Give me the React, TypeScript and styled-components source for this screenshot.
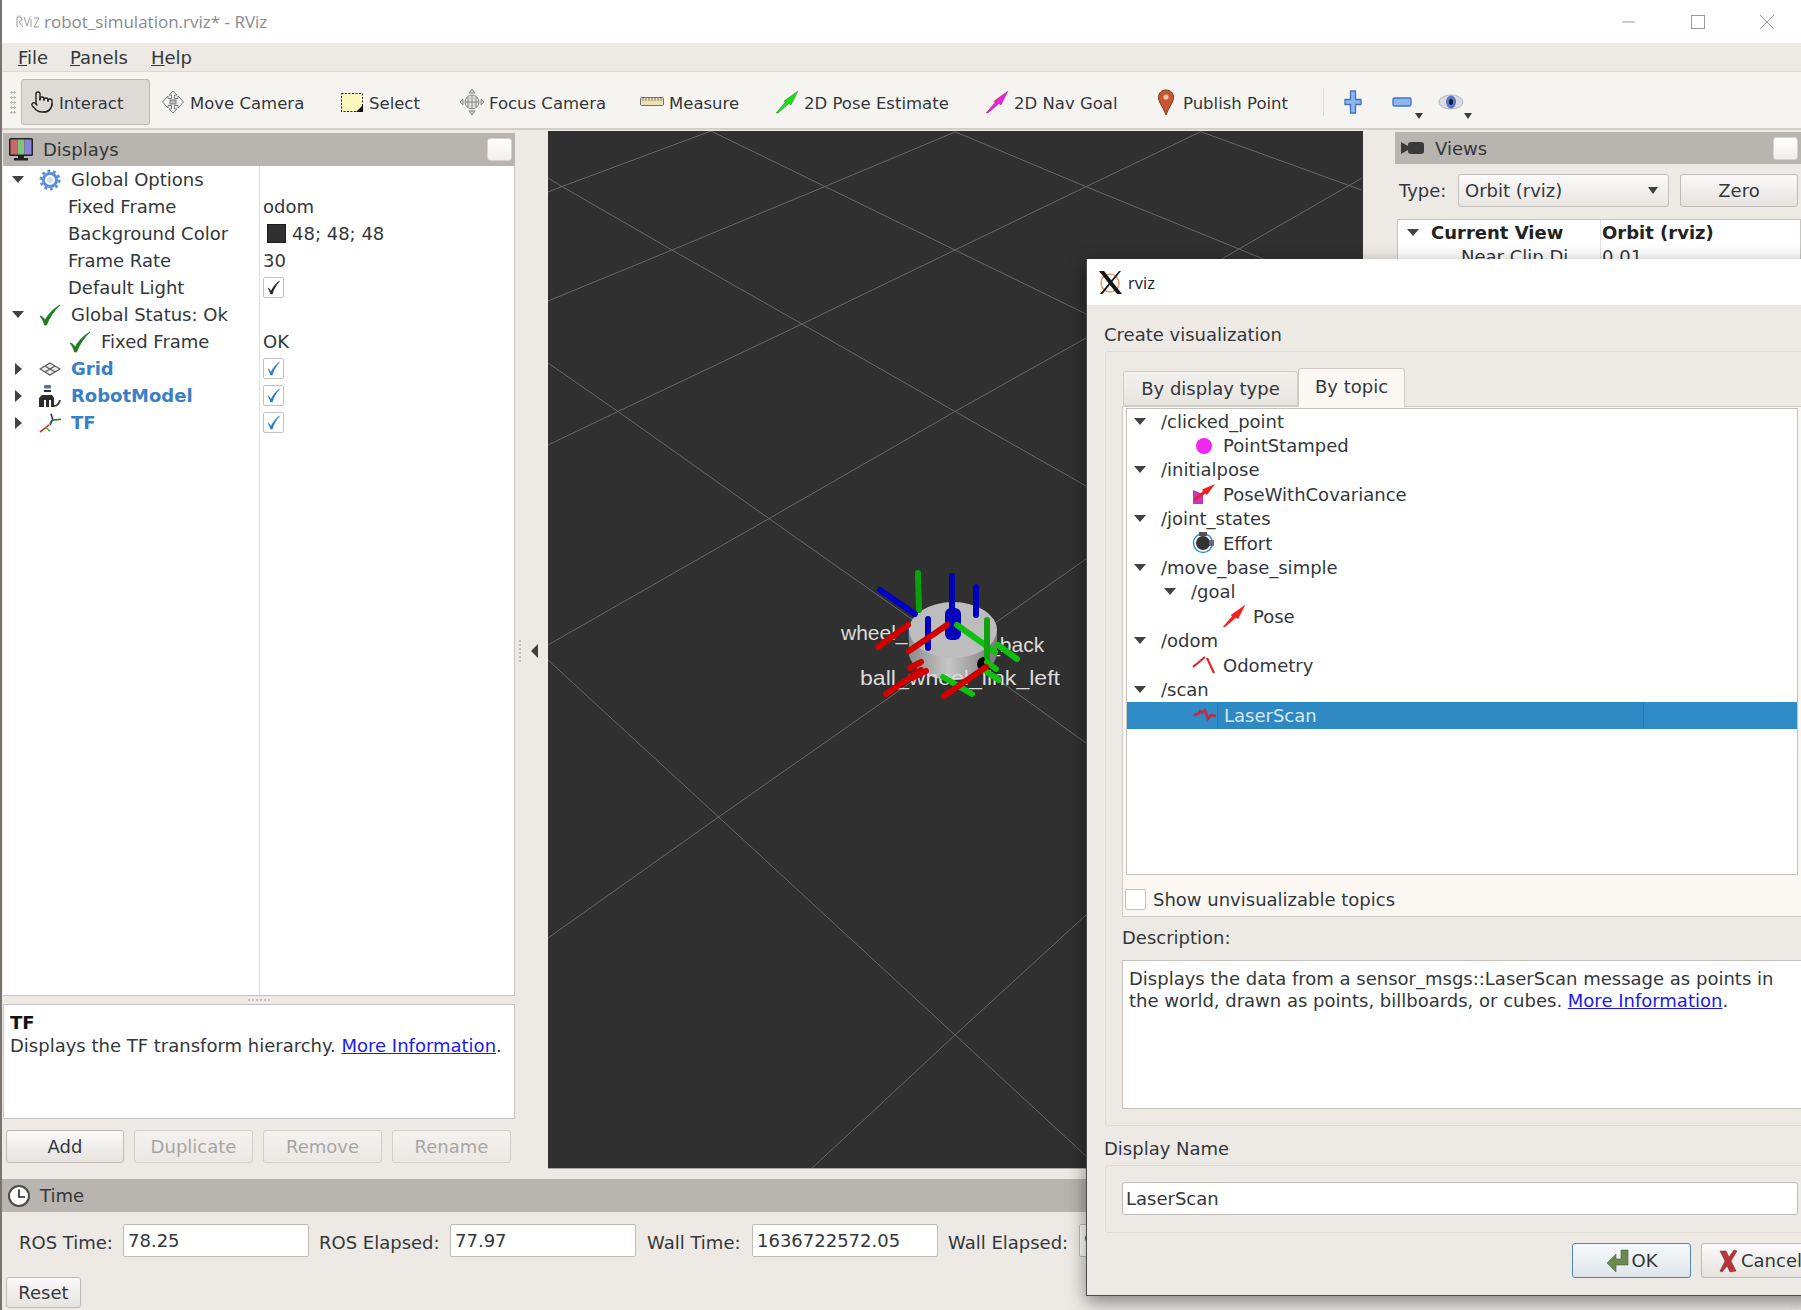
import { FC, ReactNode } from 'react';
import styled, { createGlobalStyle } from 'styled-components';
import { Pointer } from 'lucide-react';

const GlobalStyle = createGlobalStyle`
  html, body {
    margin: 0;
    padding: 0;
    background: #edeae6;
  }
  * {
    box-sizing: border-box;
  }
`;

const Screen = styled.div`
  position: relative;
  width: 1801px;
  height: 1310px;
  overflow: hidden;
  display: flex;
  flex-direction: column;
  border-left: 2px solid #77736f;
  background: #edeae6;
  color: #33373a;
  font-family: 'DejaVu Sans', sans-serif;
  font-size: 18px;
`;

/* window chrome */

const TitleBar = styled.div`
  height: 43px;
  flex: none;
  display: flex;
  align-items: center;
  padding-left: 14px;
  background: #fff;
  color: #8b8b8b;
  font-family: 'Open Sans', sans-serif;
  font-size: 17px;
`;

const TitleText = styled.span`
  margin-left: 4px;
`;

const WindowButtons = styled.div`
  margin-left: auto;
  width: 207px;
  height: 100%;
  display: flex;
`;

const WindowButton = styled.div`
  width: 69px;
  display: flex;
  align-items: center;
  justify-content: center;
`;

const MenuBar = styled.div`
  height: 29px;
  flex: none;
  display: flex;
  align-items: center;
  padding-left: 16px;
  background: #edeae6;
  border-bottom: 1px solid #dcd9d5;
  font-size: 18px;
`;

const MenuItem = styled.span`
  width: ${props => props.$width}px;
`;

const ToolBar = styled.div`
  height: 58px;
  flex: none;
  display: flex;
  align-items: center;
  padding-top: 4px;
  padding-left: 8px;
  background: #f6f4f0;
  border-bottom: 2px solid #d2cfca;
`;

const Grip = styled.div`
  width: 6px;
  height: 24px;
  margin-right: 5px;
  background-image: radial-gradient(circle, #bdb9b4 1px, transparent 1.2px);
  background-size: 3px 5px;
`;

const ToolButton = styled.div`
  width: ${props => props.$width}px;
  height: 46px;
  margin-right: ${props => props.$gap || 0}px;
  padding-left: 8px;
  display: flex;
  align-items: center;
  gap: 5px;
  font-size: 16.5px;
  border-radius: 3px;
  border: ${props => (props.$active ? '1px solid #bcb9b4' : '1px solid transparent')};
  background: ${props => (props.$active ? '#dedbd7' : 'transparent')};
`;

const ToolText = styled.span`
  padding-top: 2px;
`;

const ToolSeparator = styled.div`
  width: 1px;
  height: 28px;
  margin-right: 4px;
  background: #dedbd6;
`;

const ActionButton = styled.div`
  position: relative;
  width: 49px;
  height: 46px;
  display: flex;
  align-items: center;
  justify-content: center;
`;

const DropMark = styled.i`
  position: absolute;
  right: 3px;
  bottom: 6px;
  border-left: 4px solid transparent;
  border-right: 4px solid transparent;
  border-top: 6px solid #3c3c3c;
`;

/* main area */

const Main = styled.div`
  height: 1049px;
  flex: none;
  display: flex;
`;

const LeftDock = styled.div`
  width: 512px;
  margin-left: 1px;
  padding-top: 3px;
  display: flex;
  flex-direction: column;
`;

const DockHeader = styled.div`
  height: ${props => props.$height || 33}px;
  flex: none;
  display: flex;
  align-items: center;
  gap: 9px;
  padding-left: 5px;
  padding-right: 3px;
  background: #b8b4b0;
`;

const FloatButton = styled.div`
  margin-left: auto;
  width: 25px;
  height: 23px;
  background: linear-gradient(#fff, #f1efec);
  border: 1px solid #d5d2ce;
  border-radius: 3px;
`;

const PropertyTree = styled.div`
  height: 830px;
  flex: none;
  background: linear-gradient(#dfdfdf, #dfdfdf) no-repeat 256px 0 / 1px 100%, #fff;
  border-right: 1px solid #c8c5c1;
  border-bottom: 1px solid #c8c5c1;
`;

const PropRow = styled.div`
  height: 27px;
  display: flex;
  align-items: center;
  white-space: nowrap;
`;

const NameCell = styled.div`
  width: 257px;
  flex: none;
  display: flex;
  align-items: center;
  padding-left: ${props => props.$indent}px;
  font-weight: ${props => (props.$link ? 700 : 400)};
  color: ${props => (props.$link ? '#3a80c6' : 'inherit')};
`;

const ValueCell = styled.div`
  padding-left: 3px;
  display: flex;
  align-items: center;
  gap: 6px;
`;

const Twisty = styled.i`
  width: 14px;
  flex: none;
  display: flex;
  justify-content: center;
  margin-left: ${props => props.$left || 0}px;
  margin-right: ${props => props.$right || 0}px;
  &::before {
    content: '';
    ${props =>
      props.$open
        ? `border-left: 6.5px solid transparent;
           border-right: 6.5px solid transparent;
           border-top: 7px solid #3f4346;`
        : `border-top: 6.5px solid transparent;
           border-bottom: 6.5px solid transparent;
           border-left: 7px solid #3f4346;`}
  }
`;

const TreeIcon = styled.span`
  width: 24px;
  height: 24px;
  flex: none;
  margin-left: ${props => props.$left || 0}px;
  margin-right: ${props => props.$right || 0}px;
  display: flex;
  align-items: center;
  justify-content: center;
`;

const Swatch = styled.i`
  width: 19px;
  height: 19px;
  margin-left: 4px;
  background: #303030;
  border: 1px solid #1c1c1c;
`;

const CheckBox = styled.div`
  width: 21px;
  height: 21px;
  flex: none;
  margin-left: ${props => props.$left || 0}px;
  display: flex;
  align-items: center;
  justify-content: center;
  background: #fff;
  border: 1px solid #c5c2be;
  border-radius: 2px;
`;

const SplitBar = styled.div`
  height: 8px;
  flex: none;
  display: flex;
  align-items: center;
  justify-content: center;
  &::after {
    content: '';
    width: 24px;
    height: 2px;
    background-image: radial-gradient(circle, #bfbcb7 0.9px, transparent 1px);
    background-size: 4px 2px;
  }
`;

const HelpBox = styled.div`
  height: 115px;
  flex: none;
  padding: 6px 6px;
  background: #fff;
  border: 1px solid #c8c5c1;
  line-height: 23px;
  white-space: nowrap;
`;

const HelpTitle = styled.div`
  font-weight: 700;
  color: #111;
`;

const HelpLink = styled.a`
  color: #1a1af0;
  text-decoration: underline;
`;

const ButtonRow = styled.div`
  display: flex;
  gap: 10px;
  padding: 11px 0 0 3px;
`;

const PushButton = styled.div`
  width: ${props => props.$width}px;
  height: ${props => props.$height || 33}px;
  flex: none;
  margin-left: ${props => props.$left || 0}px;
  display: flex;
  align-items: center;
  justify-content: center;
  gap: 2px;
  color: ${props => (props.$disabled ? '#a8a6a3' : 'inherit')};
  background: ${props =>
    props.$focus
      ? 'linear-gradient(#f6f9fb, #dfe6ea)'
      : props.$disabled
        ? 'linear-gradient(#f4f2f0, #ebe8e4)'
        : 'linear-gradient(#fbfafa, #e6e3df)'};
  border: 1px solid ${props => (props.$focus ? '#4e88ae' : props.$disabled ? '#d2cfcb' : '#bebbb6')};
  border-radius: 3px;
`;

const CollapseBar = styled.div`
  width: 33px;
  flex: none;
  display: flex;
  align-items: center;
  gap: 10px;
  padding-left: 4px;
  padding-bottom: 8px;
`;

const SplitDots = styled.i`
  width: 2px;
  height: 24px;
  background-image: radial-gradient(circle, #bfbcb7 0.9px, transparent 1px);
  background-size: 2px 4px;
`;

const CollapseArrow = styled.i`
  border-top: 7px solid transparent;
  border-bottom: 7px solid transparent;
  border-right: 7px solid #3f3f3f;
`;

const Viewport = styled.div`
  width: 815px;
  height: 1038px;
  margin-top: 1px;
  flex: none;
  background: #303030;
  border-bottom: 1px solid #aaa;
`;

const RightDock = styled.div`
  width: 406px;
  margin-left: 32px;
  padding-top: 2px;
  flex: none;
`;

const TypeRow = styled.div`
  display: flex;
  align-items: center;
  height: 33px;
  margin-top: 10px;
  padding-left: 4px;
`;

const TypeLabel = styled.span`
  width: 59px;
`;

const Combo = styled.div`
  width: 211px;
  height: 33px;
  display: flex;
  align-items: center;
  justify-content: space-between;
  padding: 0 10px 0 6px;
  background: linear-gradient(#fbfafa, #e9e6e2);
  border: 1px solid #c2bfba;
  border-radius: 3px;
`;

const ComboArrow = styled.i`
  border-left: 5px solid transparent;
  border-right: 5px solid transparent;
  border-top: 7px solid #3f3f3f;
`;

const ViewTree = styled.div`
  height: 200px;
  margin: 12px 0 0 2px;
  background: linear-gradient(#dfdfdf, #dfdfdf) no-repeat 202px 0 / 1px 100%, #fff;
  border: 1px solid #c8c5c1;
`;

const ViewRow = styled.div`
  height: ${props => props.$height}px;
  display: flex;
  align-items: center;
  font-weight: ${props => (props.$bold ? 700 : 400)};
  color: ${props => (props.$bold ? '#222' : 'inherit')};
  white-space: nowrap;
`;

const ViewName = styled.span`
  width: ${props => props.$width}px;
  flex: none;
  padding-left: ${props => props.$indent || 0}px;
`;

/* time panel */

const TimeRow = styled.div`
  display: flex;
  align-items: center;
  margin-top: 12px;
  padding-left: 17px;
  white-space: nowrap;
`;

const TimeLabel = styled.span`
  width: ${props => props.$width}px;
  flex: none;
  padding-top: 3px;
  padding-left: ${props => props.$indent || 0}px;
`;

const TextField = styled.div`
  width: ${props => props.$width}px;
  height: 33px;
  flex: none;
  display: flex;
  align-items: center;
  padding-left: 4px;
  background: #fff;
  border: 1px solid #bfbcb7;
  border-radius: 2px;
`;

const ResetRow = styled.div`
  padding: 20px 0 0 4px;
`;

/* dialog */

const Dialog = styled.div`
  position: absolute;
  left: 1084px;
  top: 259px;
  width: 747px;
  height: 1037px;
  display: flex;
  flex-direction: column;
  background: #edeae6;
  border-left: 1px solid #4b4b4b;
  border-bottom: 1px solid #4b4b4b;
  box-shadow: 0 6px 18px rgba(0, 0, 0, 0.45);
`;

const DialogTitle = styled.div`
  height: 46px;
  flex: none;
  display: flex;
  align-items: center;
  gap: 5px;
  padding-left: 11px;
  background: #fff;
  color: #222;
  font-family: 'Open Sans', sans-serif;
  font-size: 16.5px;
`;

const DialogBody = styled.div`
  padding: 19px 17px 0 17px;
`;

const SectionLabel = styled.div`
  height: ${props => props.$height}px;
  padding-top: ${props => props.$top || 0}px;
  line-height: 22px;
`;

const GroupBox = styled.div`
  margin-left: 1px;
  padding: 16px 10px 0 16px;
  height: ${props => props.$height}px;
  border: 1px solid #dfdcd7;
  border-radius: 3px;
`;

const TabBar = styled.div`
  height: 38px;
  display: flex;
  align-items: flex-end;
  padding-left: 1px;
  position: relative;
`;

const Tab = styled.div`
  width: ${props => props.$width}px;
  height: ${props => (props.$active ? 39 : 35)}px;
  margin-bottom: ${props => (props.$active ? -1 : 0)}px;
  padding-bottom: ${props => (props.$active ? 3 : 0)}px;
  display: flex;
  align-items: center;
  justify-content: center;
  background: ${props => (props.$active ? '#fbf8f4' : 'linear-gradient(#f2f0ed, #e8e5e1)')};
  border: 1px solid #cfccc7;
  border-bottom: ${props => (props.$active ? 'none' : '1px solid #cfccc7')};
  border-radius: 3px 3px 0 0;
  position: relative;
`;

const TabPane = styled.div`
  height: 511px;
  padding: 1px 0 0 3px;
  background: #fbf8f4;
  border: 1px solid #cfccc7;
`;

const TopicTree = styled.div`
  height: 467px;
  width: 672px;
  background: #fff;
  border: 1px solid #c5c2be;
`;

const TopicRow = styled.div`
  height: ${props => (props.$selected ? 27 : 24.4)}px;
  display: flex;
  align-items: center;
  padding-left: ${props => props.$indent}px;
  white-space: nowrap;
  background: ${props => (props.$selected ? '#308cc6' : 'transparent')};
  color: ${props => (props.$selected ? '#d7e9f6' : 'inherit')};
`;

const TopicName = styled.span`
  margin-left: 14px;
`;

const LeafName = styled.span`
  margin-left: 7px;
`;

const SelectedCell = styled.span`
  width: 427px;
  height: 100%;
  padding-left: 6px;
  display: flex;
  align-items: center;
  border-left: 1px solid #2a7aae;
  border-right: 1px solid #2a7aae;
  background: #2e88c1;
`;

const CheckRow = styled.div`
  height: 42px;
  padding-top: 6px;
  display: flex;
  align-items: center;
  gap: 7px;
`;

const DescLabel = styled.div`
  height: 43px;
  display: flex;
  align-items: center;
  padding-bottom: 2px;
`;

const DescBox = styled.div`
  height: 149px;
  padding: 7px 6px;
  background: #fff;
  border: 1px solid #c5c2be;
  line-height: 22px;
`;

const NameInput = styled(TextField)`
  width: 676px;
  padding-left: 3px;
  border-radius: 3px;
`;

const DialogButtons = styled.div`
  display: flex;
  gap: 10px;
  margin-top: 10px;
  padding-left: 468px;
`;

const GripMark = styled.i`
  position: absolute;
  right: 3px;
  bottom: 2px;
  width: 8px;
  height: 8px;
  background-image: radial-gradient(circle, #bfbcb7 0.9px, transparent 1px);
  background-size: 3px 3px;
`;

/* icons */

const AppStamp: FC = () => (
  <svg width="24" height="13" viewBox="0 0 24 13" fill="none" stroke="#9a9a9a" strokeWidth="1">
    <path d="M1 12V2h4l1 3-3 2 4 5M8 2l3 9 3-9M15 4v8M18 3h5l-5 9h5" />
    <path d="M2 1h3M15 1v1" stroke="#c4c4c4" />
  </svg>
);

const HandIcon: FC = () => <Pointer size={24} color="#222" strokeWidth={1.4} />;

const MoveIcon: FC = () => (
  <svg width="24" height="24" viewBox="0 0 24 24" fill="#f4f4f4" stroke="#7c7c7c" strokeWidth="1">
    <path d="M12 1l4 4h-2.500v3.500H17V6l5.500 6-5.500 6v-2.500h-3.500V19H16l-4 4-4-4h2.500v-3.500H7V18l-5.500-6L7 6v2.500h3.500V5H8z" />
    <rect x="9" y="10" width="6" height="4" fill="#bdbdbd" />
  </svg>
);

const SelectIcon: FC = () => (
  <svg width="24" height="24" viewBox="0 0 24 24">
    <rect x="1.500" y="3.500" width="21" height="18" fill="#fdf8bd" stroke="#222" strokeWidth="1" strokeDasharray="2 1.500" />
    <path d="M23 15v7h-7z" fill="#111" />
  </svg>
);

const FocusIcon: FC = () => (
  <svg width="24" height="26" viewBox="0 0 24 26" fill="none" stroke="#8b8b8b" strokeWidth="1">
    <circle cx="12" cy="13" r="7" fill="#ddd" />
    <path d="M5 13h14M12 6v14M8 8v10M16 8v10" />
    <path d="M12 0l3 4H9zM12 26l3-4H9zM0 13l3-3v6zM24 13l-3-3v6z" fill="#c9c9c9" />
  </svg>
);

const RulerIcon: FC = () => (
  <svg width="24" height="14" viewBox="0 0 24 14">
    <rect x="0.500" y="2.500" width="23" height="8" rx="1" fill="#eee2b5" stroke="#6f6f6f" />
    <path d="M3 3v3M6 3v3M9 3v3M12 3v3M15 3v3M18 3v3M21 3v3" stroke="#777" strokeWidth="1" />
  </svg>
);

const PoseIcon: FC<{ color: string; edge?: string; size?: number }> = ({ color, edge = '#222', size = 24 }) => (
  <svg width={size} height={size} viewBox="0 0 24 24">
    <path d="M1 23L10 12.500 9 11 23 1 16 15l-2-1.500L3 23z" fill={color} stroke={edge} strokeWidth="0.300" />
  </svg>
);

const PinIcon: FC = () => (
  <svg width="24" height="27" viewBox="0 0 24 27">
    <path d="M12 1c4.500 0 7.500 3 7.500 7.500 0 5-4.500 9-7.500 17.500C9 17.500 4.500 13.500 4.500 8.500 4.500 4 7.500 1 12 1z" fill="#c8552d" stroke="#7a3a22" />
    <circle cx="12" cy="8" r="2.600" fill="#e9c6a8" />
  </svg>
);

const PlusIcon: FC = () => (
  <svg width="20" height="26" viewBox="0 0 20 26">
    <path d="M7.500 2h5v8.500H18v5h-5.500V24h-5v-8.500H2v-5h5.500z" fill="#8fb6ea" stroke="#3f72c4" strokeWidth="1.300" strokeLinejoin="round" />
  </svg>
);

const MinusIcon: FC = () => (
  <svg width="20" height="10" viewBox="0 0 20 10">
    <rect x="1" y="1" width="18" height="8" rx="1.500" fill="#8fb6ea" stroke="#3f72c4" strokeWidth="1.300" />
  </svg>
);

const EyeIcon: FC = () => (
  <svg width="26" height="16" viewBox="0 0 26 16">
    <ellipse cx="13" cy="8" rx="12" ry="7" fill="#d9dce4" stroke="#b4b7bf" />
    <ellipse cx="13" cy="8" rx="5" ry="6.500" fill="#5878c4" />
    <ellipse cx="13" cy="8" rx="2" ry="3" fill="#0f1a3a" />
  </svg>
);

const MonitorIcon: FC = () => (
  <svg width="26" height="25" viewBox="0 0 26 25">
    <rect x="1" y="1" width="24" height="18" rx="1.500" fill="#222" />
    <rect x="2.500" y="2.500" width="7" height="15" fill="#c96a6a" />
    <rect x="9.500" y="2.500" width="7" height="15" fill="#7fc27f" />
    <rect x="16.500" y="2.500" width="7" height="15" fill="#8c84d6" />
    <path d="M10 19h6v2h4v2.500H6V21h4z" fill="#222" />
  </svg>
);

const CameraIcon: FC = () => (
  <svg width="26" height="16" viewBox="0 0 26 16">
    <path d="M1 2l7 4v4l-7 4z" fill="#3b3b3b" />
    <rect x="8" y="2" width="16" height="12" rx="3" fill="#3b3b3b" />
  </svg>
);

const ClockIcon: FC = () => (
  <svg width="24" height="24" viewBox="0 0 24 24">
    <circle cx="12" cy="12" r="10" fill="#fff" stroke="#4a4a4a" strokeWidth="2" />
    <path d="M12 5.500V13h6" fill="none" stroke="#222" strokeWidth="1.600" />
  </svg>
);

const GearIcon: FC = () => (
  <svg width="22" height="22" viewBox="0 0 22 22">
    <circle cx="11" cy="11" r="6.500" fill="none" stroke="#5f8fdc" strokeWidth="3" />
    <circle cx="11" cy="11" r="9" fill="none" stroke="#5f8fdc" strokeWidth="3" strokeDasharray="2.800 2.860" />
    <circle cx="11" cy="11" r="3" fill="#cfe0fa" />
  </svg>
);

const GreenCheck: FC = () => (
  <svg width="22" height="22" viewBox="0 0 22 22">
    <path d="M1 12c2.500.5 4 2 5 4.500C9 10.500 14 5 21 1 15.500 6 10.500 13 7.500 21H5.500C4.500 17 3 14.500 1 12z" fill="#1f7a1f" stroke="#1f7a1f" strokeWidth="0.800" />
  </svg>
);

const GridIcon: FC = () => (
  <svg width="22" height="14" viewBox="0 0 22 14" fill="#eee" stroke="#555" strokeWidth="1.200">
    <path d="M11 1l10 6-10 6L1 7zM6 4l10 6M16 4L6 10" />
  </svg>
);

const RobotIcon: FC = () => (
  <svg width="24" height="24" viewBox="0 0 24 24">
    <rect x="6" y="1" width="7" height="3.500" rx="1" fill="#5b6e9a" />
    <rect x="6" y="6" width="7" height="2" fill="#333" />
    <path d="M1 23v-9l3-3h10l2 3v9h-3v-7h-2v7H8v-7H6v7z" fill="#2c2c2c" />
    <path d="M16 22c3 0 5-2 6-6" fill="none" stroke="#444" strokeWidth="2" />
  </svg>
);

const AxesIcon: FC = () => (
  <svg width="26" height="24" viewBox="0 0 26 24" fill="none" strokeWidth="1.700">
    <path d="M12 14L2 22" stroke="#e02424" />
    <path d="M13 14l3-6-2-6" stroke="#2323c8" />
    <path d="M8 16l5 5" stroke="#2bc22b" />
    <path d="M13 13l2-4 10-1" stroke="#1c7c1c" />
  </svg>
);

const CheckMark: FC<{ color: string }> = ({ color }) => (
  <svg width="15" height="15" viewBox="0 0 15 15">
    <path d="M2 8c1.200.5 2.200 1.500 3 3.500C7 7 10 3.500 13.500 1 10.500 4.500 7.500 9 6.300 14H4.500C4 11.500 3 9.500 2 8z" fill={color} stroke={color} strokeWidth="0.600" />
  </svg>
);

const XLogo: FC = () => (
  <svg width="25" height="25" viewBox="0 0 25 25">
    <circle cx="12" cy="13" r="9" fill="none" stroke="#e8a26c" strokeWidth="1.600" />
    <path d="M1 1h5l18 23h-5z" fill="#151515" />
    <path d="M23 1h-2L2 24h2.500z" fill="#151515" />
  </svg>
);

const DotIcon: FC = () => (
  <svg width="18" height="18" viewBox="0 0 18 18">
    <circle cx="9" cy="9" r="8" fill="#ee28ee" />
  </svg>
);

const CovarianceIcon: FC = () => (
  <svg width="24" height="22" viewBox="0 0 24 22">
    <path d="M1 7l10 4v10H1z" fill="#c635bd" />
    <path d="M2 16L11 8l-1-1.500L23 1l-8 11-1.500-1.500L3 18z" fill="#ed2020" />
  </svg>
);

const EffortIcon: FC = () => (
  <svg width="24" height="24" viewBox="0 0 24 24">
    <circle cx="11" cy="12" r="9.500" fill="none" stroke="#2d8ae0" strokeWidth="1.400" />
    <circle cx="11" cy="12" r="7" fill="#333" />
    <rect x="7" y="1" width="8" height="4" fill="#555" />
    <rect x="17" y="9" width="5" height="6" fill="#667" />
  </svg>
);

const OdomIcon: FC = () => (
  <svg width="24" height="20" viewBox="0 0 24 20" fill="none" stroke="#e02525" strokeWidth="2.200">
    <path d="M1 12L13 2" />
    <path d="M15 3l7 15" />
  </svg>
);

const ScanIcon: FC = () => (
  <svg width="24" height="14" viewBox="0 0 24 14" fill="none" stroke="#c6283a" strokeWidth="2.400">
    <path d="M1 7l4-1 2-3 2 2 3-3 3 9 3-4 5 1" />
  </svg>
);

const OkIcon: FC = () => (
  <svg width="24" height="24" viewBox="0 0 24 24">
    <path d="M1 14l9-9v5h5V1h7v15H10v7z" fill="#6d8a4e" stroke="#46603a" strokeWidth="0.600" />
  </svg>
);

const CancelIcon: FC = () => (
  <svg width="20" height="24" viewBox="0 0 20 24">
    <path d="M1 2h6l3 6 5-7 3 1-6 10 5 10-6 1-3-6-5 6-2-1 5-10z" fill="#b9343a" stroke="#7a2226" strokeWidth="0.500" />
  </svg>
);

const WindowMin: FC = () => (
  <svg width="16" height="16"><path d="M1 8h13" stroke="#9a9a9a" /></svg>
);
const WindowMax: FC = () => (
  <svg width="16" height="16"><rect x="1.500" y="1.500" width="13" height="13" fill="none" stroke="#9a9a9a" /></svg>
);
const WindowClose: FC = () => (
  <svg width="18" height="18"><path d="M2 2l14 14M16 2L2 16" stroke="#9a9a9a" /></svg>
);

/* the 3D scene, drawn in screen coordinates of the viewport */

const gridLines: [number, number][][] = [
  [[711, 131], [825, 186.500], [955, 250], [1363, 449]],
  [[548, 178], [562, 186.500], [672, 250], [802, 324], [955, 411.500], [1086, 486], [1363, 650]],
  [[548, 363], [618, 411.500], [769, 518.600], [1004, 684], [1086, 743], [1363, 950]],
  [[548, 660], [718.600, 817], [955, 1035], [1086, 1156], [1100, 1169]],
  [[955, 131.700], [1086, 186.700], [1239, 249], [1363, 300]],
  [[1200.700, 131.700], [1361.500, 190]],
  [[548, 192], [562, 186.500], [711, 131]],
  [[548, 301], [672, 250], [825, 186.500], [955, 132]],
  [[548, 445], [618, 411.500], [802, 324], [955, 250], [1086, 186.700], [1200.700, 131.700]],
  [[548, 645], [769, 518.600], [955, 411.500], [1086, 338], [1239, 249], [1362, 178]],
  [[548, 938], [718.600, 817], [890, 697], [1086, 559], [1363, 370]],
  [[811, 1169], [955, 1035], [1086, 915], [1363, 660]],
];

const axisLines: [number, number, number, number, string, number][] = [
  [918, 573, 919, 610, '#0aa00a', 6],
  [880, 590, 915, 614, '#0000c0', 6],
  [952, 576, 952, 634, '#0000b8', 6],
  [976, 587, 976, 615, '#0000c0', 6],
  [928, 619, 928, 648, '#0000c0', 6],
  [878, 647, 908, 625, '#d00000', 6],
  [909, 651, 947, 625, '#d00000', 6],
  [957, 625, 995, 652, '#10c010', 6],
  [998, 645, 1017, 659, '#10c010', 6],
  [987, 620, 987, 657, '#10a010', 6],
  [910, 668, 921, 662, '#d00000', 6],
  [886, 694, 921, 670, '#d00000', 6],
  [912, 678, 926, 671, '#d00000', 6],
  [943, 677, 972, 694, '#10c010', 6],
  [987, 662, 996, 669, '#10c010', 6],
  [987, 672, 999, 680, '#10c010', 6],
  [944, 696, 986, 667, '#d00000', 6],
];

const Scene: FC = () => (
  <svg width="815" height="1037" viewBox="548 131 815 1037">
    <defs>
      <linearGradient id="body" x1="0" x2="1" y1="0" y2="0">
        <stop offset="0" stopColor="#8c8c8c" />
        <stop offset="0.450" stopColor="#c6c6c6" />
        <stop offset="1" stopColor="#777" />
      </linearGradient>
    </defs>
    {gridLines.map((line, i) => (
      <polyline key={i} points={line.map(p => p.join(',')).join(' ')} fill="none" stroke="#686868" strokeWidth="1" />
    ))}
    <text x="841" y="640" fill="#dcdcdc" fontFamily="Liberation Sans" fontSize="21">wheel_link</text>
    <text x="945" y="652" fill="#dcdcdc" fontFamily="Liberation Sans" fontSize="21">_link_back</text>
    <path d="M909 630v25c4 16 23 25 44 25s40-9 44-25v-25z" fill="url(#body)" />
    <ellipse cx="953" cy="630" rx="44" ry="28" fill="#bdbdbd" />
    <circle cx="984" cy="664" r="7" fill="#000" />
    <text x="860" y="685" fill="#dcdcdc" fontFamily="Liberation Sans" fontSize="21" textLength="200" lengthAdjust="spacingAndGlyphs">ball_wheel_link_left</text>
    <rect x="945" y="608" width="16" height="32" rx="6" fill="#0000c4" />
    {axisLines.map(([x1, y1, x2, y2, color, w], i) => (
      <line key={i} x1={x1} y1={y1} x2={x2} y2={y2} stroke={color} strokeWidth={w} strokeLinecap="round" />
    ))}
  </svg>
);

/* data */

type Prop = {
  name: string;
  indent: number;
  open?: boolean;
  icon?: ReactNode;
  link?: boolean;
  value?: ReactNode;
};

const checked = (
  <CheckBox>
    <CheckMark color="#1f1f1f" />
  </CheckBox>
);
const blueChecked = (
  <CheckBox>
    <CheckMark color="#2e78c0" />
  </CheckBox>
);

const displayRows: Prop[] = [
  { name: 'Global Options', indent: 8, open: true, icon: <GearIcon /> },
  { name: 'Fixed Frame', indent: 65, value: 'odom' },
  {
    name: 'Background Color',
    indent: 65,
    value: (
      <>
        <Swatch />
        48; 48; 48
      </>
    ),
  },
  { name: 'Frame Rate', indent: 65, value: '30' },
  { name: 'Default Light', indent: 65, value: checked },
  { name: 'Global Status: Ok', indent: 8, open: true, icon: <GreenCheck /> },
  { name: 'Fixed Frame', indent: 65, icon: <GreenCheck />, value: 'OK' },
  { name: 'Grid', indent: 8, open: false, icon: <GridIcon />, link: true, value: blueChecked },
  { name: 'RobotModel', indent: 8, open: false, icon: <RobotIcon />, link: true, value: blueChecked },
  { name: 'TF', indent: 8, open: false, icon: <AxesIcon />, link: true, value: blueChecked },
];

const tools = [
  { label: 'Interact', width: 129, gap: 2, icon: <HandIcon />, active: true },
  { label: 'Move Camera', width: 179, icon: <MoveIcon /> },
  { label: 'Select', width: 120, icon: <SelectIcon /> },
  { label: 'Focus Camera', width: 180, icon: <FocusIcon /> },
  { label: 'Measure', width: 135, icon: <RulerIcon /> },
  { label: '2D Pose Estimate', width: 210, icon: <PoseIcon color="#17e017" /> },
  { label: '2D Nav Goal', width: 169, icon: <PoseIcon color="#ee20d8" /> },
  { label: 'Publish Point', width: 178, icon: <PinIcon /> },
];

const topics: { text: string; indent: number; open?: boolean; icon?: ReactNode }[] = [
  { text: '/clicked_point', indent: 6, open: true },
  { text: 'PointStamped', indent: 65, icon: <DotIcon /> },
  { text: '/initialpose', indent: 6, open: true },
  { text: 'PoseWithCovariance', indent: 65, icon: <CovarianceIcon /> },
  { text: '/joint_states', indent: 6, open: true },
  { text: 'Effort', indent: 65, icon: <EffortIcon /> },
  { text: '/move_base_simple', indent: 6, open: true },
  { text: '/goal', indent: 36, open: true },
  { text: 'Pose', indent: 95, icon: <PoseIcon color="#ee2020" edge="#ee2020" /> },
  { text: '/odom', indent: 6, open: true },
  { text: 'Odometry', indent: 65, icon: <OdomIcon /> },
  { text: '/scan', indent: 6, open: true },
];

const App: FC = () => {
  return (
    <Screen>
      <GlobalStyle />
      <TitleBar>
        <AppStamp />
        <TitleText>robot_simulation.rviz* - RViz</TitleText>
        <WindowButtons>
          <WindowButton><WindowMin /></WindowButton>
          <WindowButton><WindowMax /></WindowButton>
          <WindowButton><WindowClose /></WindowButton>
        </WindowButtons>
      </TitleBar>
      <MenuBar>
        <MenuItem $width={52}><u>F</u>ile</MenuItem>
        <MenuItem $width={81}><u>P</u>anels</MenuItem>
        <MenuItem $width={60}><u>H</u>elp</MenuItem>
      </MenuBar>
      <ToolBar>
        <Grip />
        {tools.map(tool => (
          <ToolButton key={tool.label} $width={tool.width} $gap={tool.gap} $active={tool.active}>
            {tool.icon}
            <ToolText>{tool.label}</ToolText>
          </ToolButton>
        ))}
        <ToolSeparator />
        <ActionButton><PlusIcon /></ActionButton>
        <ActionButton><MinusIcon /><DropMark /></ActionButton>
        <ActionButton><EyeIcon /><DropMark /></ActionButton>
      </ToolBar>
      <Main>
        <LeftDock>
          <DockHeader>
            <MonitorIcon />
            Displays
            <FloatButton />
          </DockHeader>
          <PropertyTree>
            {displayRows.map((row, i) => (
              <PropRow key={i}>
                <NameCell $indent={row.indent} $link={row.link}>
                  {row.open !== undefined && <Twisty $open={row.open} />}
                  {row.icon && (
                    <TreeIcon $left={row.open !== undefined ? 13 : 0} $right={9}>
                      {row.icon}
                    </TreeIcon>
                  )}
                  {row.name}
                </NameCell>
                <ValueCell>{row.value}</ValueCell>
              </PropRow>
            ))}
          </PropertyTree>
          <SplitBar />
          <HelpBox>
            <HelpTitle>TF</HelpTitle>
            Displays the TF transform hierarchy. <HelpLink>More Information</HelpLink>.
          </HelpBox>
          <ButtonRow>
            <PushButton $width={118}>Add</PushButton>
            <PushButton $width={119} $disabled>Duplicate</PushButton>
            <PushButton $width={119} $disabled>Remove</PushButton>
            <PushButton $width={119} $disabled>Rename</PushButton>
          </ButtonRow>
        </LeftDock>
        <CollapseBar>
          <SplitDots />
          <CollapseArrow />
        </CollapseBar>
        <Viewport>
          <Scene />
        </Viewport>
        <RightDock>
          <DockHeader $height={32}>
            <CameraIcon />
            Views
            <FloatButton />
          </DockHeader>
          <TypeRow>
            <TypeLabel>Type:</TypeLabel>
            <Combo>
              Orbit (rviz)
              <ComboArrow />
            </Combo>
            <PushButton $width={118} $left={11}>Zero</PushButton>
          </TypeRow>
          <ViewTree>
            <ViewRow $height={25} $bold>
              <Twisty $open $left={8} $right={11} />
              <ViewName $width={171}>Current View</ViewName>
              Orbit (rviz)
            </ViewRow>
            <ViewRow $height={22}>
              <ViewName $width={204} $indent={63}>Near Clip Di</ViewName>
              0.01
            </ViewRow>
          </ViewTree>
        </RightDock>
      </Main>
      <DockHeader>
        <ClockIcon />
        Time
      </DockHeader>
      <TimeRow>
        <TimeLabel $width={104}>ROS Time:</TimeLabel>
        <TextField $width={186}>78.25</TextField>
        <TimeLabel $width={141} $indent={10}>ROS Elapsed:</TimeLabel>
        <TextField $width={186}>77.97</TextField>
        <TimeLabel $width={116} $indent={11}>Wall Time:</TimeLabel>
        <TextField $width={186}>1636722572.05</TextField>
        <TimeLabel $width={141} $indent={10}>Wall Elapsed:</TimeLabel>
        <TextField $width={100}>9</TextField>
      </TimeRow>
      <ResetRow>
        <PushButton $width={75} $height={31}>Reset</PushButton>
      </ResetRow>

      <Dialog>
        <DialogTitle>
          <XLogo />
          rviz
        </DialogTitle>
        <DialogBody>
          <SectionLabel $height={27}>Create visualization</SectionLabel>
          <GroupBox $height={775}>
            <TabBar>
              <Tab $width={175}>By display type</Tab>
              <Tab $width={107} $active>By topic</Tab>
            </TabBar>
            <TabPane>
              <TopicTree>
                {topics.map(topic => (
                  <TopicRow key={topic.text} $indent={topic.indent}>
                    {topic.icon ? (
                      <>
                        <TreeIcon>{topic.icon}</TreeIcon>
                        <LeafName>{topic.text}</LeafName>
                      </>
                    ) : (
                      <>
                        <Twisty $open={topic.open} />
                        <TopicName>{topic.text}</TopicName>
                      </>
                    )}
                  </TopicRow>
                ))}
                <TopicRow $indent={66} $selected>
                  <TreeIcon><ScanIcon /></TreeIcon>
                  <SelectedCell>LaserScan</SelectedCell>
                </TopicRow>
              </TopicTree>
              <CheckRow>
                <CheckBox $left={-1} />
                Show unvisualizable topics
              </CheckRow>
            </TabPane>
            <DescLabel>Description:</DescLabel>
            <DescBox>
              Displays the data from a sensor_msgs::LaserScan message as points in
              <br />
              the world, drawn as points, billboards, or cubes. <HelpLink>More Information</HelpLink>.
            </DescBox>
          </GroupBox>
          <SectionLabel $height={39} $top={12}>Display Name</SectionLabel>
          <GroupBox $height={68}>
            <NameInput>LaserScan</NameInput>
          </GroupBox>
          <DialogButtons>
            <PushButton $width={119} $height={35} $focus><OkIcon />OK</PushButton>
            <PushButton $width={119} $height={35}><CancelIcon />Cancel</PushButton>
          </DialogButtons>
        </DialogBody>
      </Dialog>
      <GripMark />
    </Screen>
  );
};

export default App;
